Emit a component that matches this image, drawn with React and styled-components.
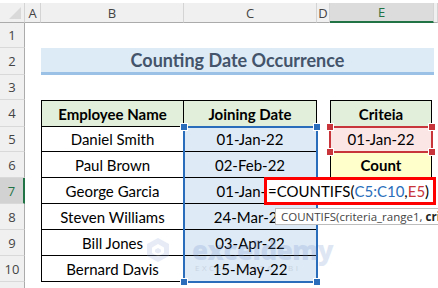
import React from 'react';
import styled, { createGlobalStyle } from 'styled-components';

const GlobalStyle = createGlobalStyle`
  html, body {
    margin: 0;
    padding: 0;
    background: #fff;
  }
  body {
    font-family: 'Lato', 'Liberation Sans', sans-serif;
    color: #000;
  }
`;

const COLS = ['A', 'B', 'C', 'D', 'E'];
const ROW_HEIGHTS = [25, 27, 25, 27, 25, 26, 26, 26, 26, 26, 26];

const employees = [
  ['Daniel Smith', '01-Jan-22'],
  ['Paul Brown', '02-Feb-22'],
  ['George Garcia', '01-Jan-22'],
  ['Steven Williams', '24-Mar-22'],
  ['Bill Jones', '03-Apr-22'],
  ['Bernard Davis', '15-May-22'],
];

const Sheet = styled.div`
  position: relative;
  display: grid;
  grid-template-columns: 25px 16px 143px 133px 13px 104px 4px;
  grid-template-rows: 20px ${ROW_HEIGHTS.map((h) => `${h}px`).join(' ')};
  padding-top: 3px;
  width: 438px;
  height: 285px;
  overflow: hidden;
  background: #fff;
`;

const Corner = styled.div`
  grid-column: 1;
  grid-row: 1;
  position: relative;
  background: #f0f0f0;
  border-right: 1px solid #d4d4d4;
  border-bottom: 1px solid #ababab;
  &::after {
    content: '';
    position: absolute;
    right: 3px;
    bottom: 3px;
    border-style: solid;
    border-width: 0 0 12px 12px;
    border-color: transparent transparent #d9d9d9 transparent;
  }
`;

const ColHead = styled.div`
  grid-row: 1;
  grid-column: ${(p) => p.$col};
  display: flex;
  align-items: center;
  justify-content: center;
  font-family: 'Open Sans', 'Noto Sans', sans-serif;
  font-size: 13px;
  color: ${(p) => (p.$active ? '#217346' : '#444')};
  background: ${(p) => (p.$active ? '#dcdcdc' : '#f0f0f0')};
  border-right: 1px solid #d4d4d4;
  border-bottom: ${(p) => (p.$active ? '2px solid #217346' : '1px solid #ababab')};
`;

const RowHead = styled.div`
  grid-column: 1;
  grid-row: ${(p) => p.$row};
  display: flex;
  align-items: center;
  justify-content: center;
  font-family: 'Open Sans', 'Noto Sans', sans-serif;
  font-size: 13px;
  color: ${(p) => (p.$active ? '#217346' : '#444')};
  background: ${(p) => (p.$active ? '#d2d2d2' : '#f0f0f0')};
  border-bottom: 1px solid #d9d9d9;
  border-right: ${(p) => (p.$active ? '2px solid #217346' : '1px solid #ababab')};
`;

const Banner = styled.div`
  grid-column: 3 / 7;
  grid-row: 3;
  display: flex;
  align-items: center;
  justify-content: center;
  background: #ddebf7;
  border-bottom: 3px solid #9bc2e6;
  color: #44546a;
  font-size: 18px;
  font-weight: 700;
`;

const Cell = styled.div`
  grid-column: ${(p) => p.$col};
  grid-row: ${(p) => p.$row};
  display: flex;
  align-items: center;
  justify-content: center;
  font-size: 15px;
  font-weight: ${(p) => (p.$bold ? 700 : 400)};
  background: ${(p) => p.$bg || 'transparent'};
  border-right: 1px solid #000;
  border-bottom: 1px solid #000;
  border-left: ${(p) => (p.$left ? '1px solid #000' : 'none')};
  border-top: ${(p) => (p.$top ? '1px solid #000' : 'none')};
  margin-right: ${(p) => p.$trim || 0}px;
  white-space: nowrap;
`;

const Range = styled.div`
  grid-column: ${(p) => p.$col};
  grid-row: ${(p) => p.$row};
  position: relative;
  margin: -1px ${(p) => (p.$trim ? p.$trim - 1 : -1)}px -1px -1px;
  border: 2px solid ${(p) => p.$color};
  pointer-events: none;
`;

const Handle = styled.span`
  position: absolute;
  width: 6px;
  height: 6px;
  background: ${(p) => p.$color};
  border: 1px solid #fff;
  ${(p) => (p.$top ? 'top: -5px;' : 'bottom: -5px;')}
  ${(p) => (p.$left ? 'left: -5px;' : 'right: -5px;')}
`;

const Editor = styled.div`
  position: absolute;
  left: 264px;
  top: 177px;
  width: 172px;
  height: 28px;
  box-sizing: border-box;
  border: 3px solid #ff0000;
  background: #fff;
  display: flex;
  align-items: center;
  padding-left: 1px;
  font-size: 15px;
  white-space: nowrap;
`;

const Ref = styled.span`
  color: ${(p) => p.$color};
`;

const Tooltip = styled.div`
  position: absolute;
  left: 275px;
  top: 208px;
  height: 17px;
  width: 163px;
  box-sizing: border-box;
  padding-left: 5px;
  display: flex;
  align-items: center;
  overflow: hidden;
  background: #fff;
  border: 1px solid #bdbdbd;
  border-right: none;
  font-family: 'Open Sans', 'Noto Sans', sans-serif;
  font-size: 11.5px;
  color: #444;
  white-space: pre;
  b {
    font-weight: 700;
    color: #222;
  }
`;

const Watermark = styled.div`
  position: absolute;
  left: 146px;
  top: 237px;
  display: flex;
  align-items: flex-start;
  gap: 22px;
  opacity: 0.22;
  pointer-events: none;
`;

const Brand = styled.div`
  display: flex;
  flex-direction: column;
  line-height: 1;
  .name {
    font-family: 'Open Sans', sans-serif;
    font-weight: 800;
    font-size: 26px;
    color: #6f8fcb;
    letter-spacing: -0.5px;
  }
  .tag {
    font-family: 'Open Sans', sans-serif;
    font-size: 8px;
    letter-spacing: 2.5px;
    color: #7b8393;
    margin-top: 1px;
    padding-left: 3px;
  }
`;

const Corners = ({ color }) => (
  <>
    <Handle $color={color} $top $left />
    <Handle $color={color} $top />
    <Handle $color={color} $left />
    <Handle $color={color} />
  </>
);

export default function App() {
  return (
    <>
      <GlobalStyle />
      <Sheet>
        <Corner />
        {COLS.map((c, i) => (
          <ColHead key={c} $col={i + 2} $active={c === 'E'}>
            {c}
          </ColHead>
        ))}
        <ColHead $col={7} />
        {ROW_HEIGHTS.map((_, i) => (
          <RowHead key={i} $row={i + 2} $active={i + 1 === 7}>
            {i < 10 ? i + 1 : ''}
          </RowHead>
        ))}

        <Banner>Counting Date Occurrence</Banner>

        <Cell $col={3} $row={5} $left $top $bold $bg="#e2efda">
          Employee Name
        </Cell>
        <Cell $col={4} $row={5} $top $bold $bg="#e2efda">
          Joining Date
        </Cell>
        {employees.map(([name, date], i) => (
          <React.Fragment key={name}>
            <Cell $col={3} $row={i + 6} $left>
              {name}
            </Cell>
            <Cell $col={4} $row={i + 6} $bg="#deeaf6">
              {date}
            </Cell>
          </React.Fragment>
        ))}

        <Cell $col={6} $row={5} $left $top $bold $bg="#e2efda" $trim={2}>
          Criteia
        </Cell>
        <Cell $col={6} $row={6} $left $bg="#fbe5e5" $trim={2}>
          01-Jan-22
        </Cell>
        <Cell $col={6} $row={7} $left $bold $bg="#ffffcc" $trim={2}>
          Count
        </Cell>

        <Range $col={4} $row="6 / 12" $color="#2a6ebb">
          <Corners color="#2a6ebb" />
        </Range>
        <Range $col={6} $row={6} $color="#c8353b" $trim={2}>
          <Corners color="#c8353b" />
        </Range>

        <Watermark>
          <svg width="24" height="26" viewBox="0 0 24 26">
            <path d="M12 1 L23 7 L23 19 L12 25 L1 19 L1 7 Z" fill="#8fa6d6" />
            <path d="M12 7 L18 10.5 L18 16 L12 19.5 L6 16 L6 10.5 Z" fill="#fff" />
            <path d="M12 11 L15 12.8 L15 15 L12 16.5 L9 15 L9 12.8 Z" fill="#8fa6d6" />
          </svg>
          <Brand>
            <span className="name">exceldemy</span>
            <span className="tag">EXCEL · DATA · BI</span>
          </Brand>
        </Watermark>

        <Editor>
          =COUNTIFS(<Ref $color="#2a6ebb">C5:C10</Ref>,<Ref $color="#c8353b">E5</Ref>)
        </Editor>
        <Tooltip>
          {'COUNTIFS(criteria_range1, '}
          <b>crit</b>
        </Tooltip>
      </Sheet>
    </>
  );
}
